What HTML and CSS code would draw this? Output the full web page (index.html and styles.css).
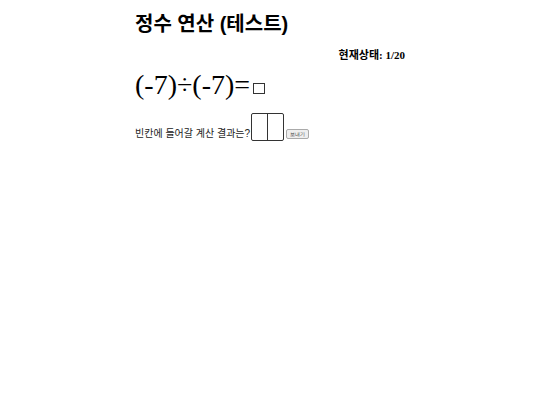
FILE: index.html
```html
<!DOCTYPE html>
<html lang="ko">
<head>
<meta charset="utf-8">
<link rel="stylesheet" href="styles.css">
</head>
<body>
<div class="wrap">
  <h1 class="title">정수 연산 (테스트)</h1>
  <div class="status">현재상태: 1/20</div>
  <div class="problem">(-7)÷(-7)=<span class="blank"></span></div>
  <div class="answer">
    <span class="question">빈칸에 들어갈 계산 결과는?</span>
    <span class="boxes"><span class="cell"></span><span class="cell"></span></span>
    <button class="send">보내기</button>
  </div>
</div>
</body>
</html>
```
FILE: styles.css
```css
html, body { margin: 0; padding: 0; background: #fff; }
body { font-family: "Liberation Serif", "Noto Sans CJK KR", serif; color: #000; }
.wrap { width: 270px; margin: 0 auto; padding-top: 12px; }
.title { font-family: "Liberation Sans", "Noto Sans CJK KR", sans-serif; font-size: 20px; font-weight: bold; margin: 0; line-height: 24px; }
.status { text-align: right; font-size: 11px; font-weight: bold; margin-top: 12px; line-height: 14px; }
.problem { font-size: 28px; line-height: 32px; margin-top: 7px; }
.blank { display: inline-block; width: 10px; height: 9px; border: 1px solid #333; margin-left: 3px; vertical-align: baseline; }
.answer { display: flex; align-items: flex-end; margin-top: 12px; font-family: "Liberation Sans", "Noto Sans CJK KR", sans-serif; }
.question { font-size: 10px; color: #222; line-height: 13px; padding-bottom: 1px; }
.boxes { display: flex; margin-left: 1px; border: 1px solid #333; border-radius: 2px; height: 26px; }
.cell { width: 15px; height: 26px; }
.cell + .cell { border-left: 1px solid #333; }
.send { font-size: 5px; padding: 1px 3px; margin-left: 2px; margin-bottom: 2px; border: 1px solid #aaa; background: #eee; border-radius: 2px; line-height: 6px; color: #333; }
```
